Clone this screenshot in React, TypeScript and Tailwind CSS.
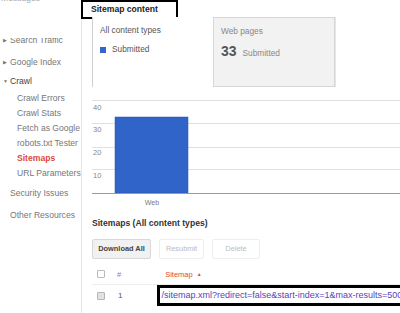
import React from "react";

const subItems = ["Crawl Errors", "Crawl Stats", "Fetch as Google", "robots.txt Tester"];

function Caret({ open }: { open?: boolean }) {
  return (
    <span className="inline-block w-[7px] text-[5px] leading-none text-[#777]">{open ? "▼" : "▶"}</span>
  );
}

function Sidebar() {
  return (
    <div className="w-[82px] shrink-0 border-r border-[#e6e6e6] bg-white text-[8.6px] text-[#777]">
      {/* top item, cut off by the crop */}
      <div className="h-[4px] overflow-hidden pl-[1px]">
        <div className="-mt-[7px] leading-[11px] text-[#aaa]">Messages</div>
      </div>
      <div className="mt-[34px] h-[8px] overflow-hidden pl-[3px]">
        <div className="-mt-[3px] flex items-center leading-[11px]">
          <Caret />
          <span>Search Traffic</span>
        </div>
      </div>
      <div className="mt-[7px] flex h-[18px] items-center pl-[3px]">
        <Caret />
        <span>Google Index</span>
      </div>
      <div className="flex h-[20px] items-center pl-[3px] text-[#444]">
        <Caret open />
        <span>Crawl</span>
      </div>
      {subItems.map((s) => (
        <div key={s} className="flex h-[15px] items-center pl-[17px]">
          {s}
        </div>
      ))}
      <div className="flex h-[15px] items-center pl-[17px] font-bold text-[#dd4b39]">Sitemaps</div>
      <div className="flex h-[15px] items-center pl-[17px]">URL Parameters</div>
      <div className="flex h-[24px] items-center pl-[10px]">Security Issues</div>
      <div className="flex h-[20px] items-center pl-[10px]">Other Resources</div>
    </div>
  );
}

function Chart() {
  const grid = [5, 28, 52, 74];
  const labels = [
    { t: "40", y: 15 },
    { t: "30", y: 37 },
    { t: "20", y: 60 },
    { t: "10", y: 83 },
  ];
  return (
    <svg width="308" height="116" className="block" fontFamily="Liberation Sans, Arial, sans-serif">
      {grid.map((y) => (
        <line key={y} x1="0" x2="308" y1={y + 0.5} y2={y + 0.5} stroke="#e0e0e0" strokeWidth="1" />
      ))}
      {labels.map((l) => (
        <text key={l.t} x="1" y={l.y} fontSize="7.5" fill="#888">
          {l.t}
        </text>
      ))}
      <rect x="23" y="22" width="73" height="76" fill="#3064c8" stroke="#2a56b0" strokeWidth="0.5" />
      <line x1="0" x2="308" y1="98.5" y2="98.5" stroke="#999" strokeWidth="1.2" />
      <text x="60" y="110" fontSize="7" fill="#777" textAnchor="middle">
        Web
      </text>
    </svg>
  );
}

export default function App() {
  return (
    <div className="flex h-[313px] w-[400px] overflow-hidden bg-white font-['Liberation_Sans',Arial,sans-serif]">
      <Sidebar />

      <div className="flex min-w-0 flex-1 flex-col">
        {/* header box */}
        <div className="-ml-px flex h-[19px] w-[97px] items-center border-[2.5px] border-black pl-[8px] text-[8.6px] font-bold text-[#222]">
          Sitemap content
        </div>

        {/* tabs */}
        <div className="-mt-[2px] flex pl-[10px]">
          <div className="h-[70px] w-[121px] border-l border-[#cfcfcf] bg-white px-[7px] pt-[7px] text-[8.3px] text-[#555]">
            <div>All content types</div>
            <div className="mt-[7px] flex items-center gap-[6px]">
              <span className="h-[6px] w-[6px] bg-[#3366cc]" />
              <span>Submitted</span>
            </div>
          </div>
          <div className="h-[70px] w-[122px] border border-[#d6d6d6] bg-[#f2f2f2] px-[7px] pt-[7px] text-[8.3px] text-[#888] shadow-[1px_0_0_#e6e6e6]">
            <div>Web pages</div>
            <div className="mt-[4px] flex items-baseline gap-[6px]">
              <span className="text-[14px] font-bold text-[#555]">33</span>
              <span>Submitted</span>
            </div>
          </div>
        </div>

        {/* chart */}
        <div className="mt-[8px] pl-[10px]">
          <Chart />
        </div>

        {/* sitemaps table */}
        <div className="pl-[10px]">
          <div className="mt-[6px] text-[8.6px] font-bold text-[#333]">Sitemaps (All content types)</div>
          <div className="mt-[9px] flex gap-[8px]">
            <div className="flex h-[20px] w-[59px] items-center justify-center rounded-[2px] border border-[#d8d8d8] bg-[#f1f1f1] text-[7.4px] font-bold text-[#444]">
              Download All
            </div>
            <div className="flex h-[20px] w-[45px] items-center justify-center rounded-[2px] border border-[#eeeeee] bg-white text-[7.4px] text-[#bbb]">
              Resubmit
            </div>
            <div className="flex h-[20px] w-[48px] items-center justify-center rounded-[2px] border border-[#eeeeee] bg-white text-[7.4px] text-[#bbb]">
              Delete
            </div>
          </div>

          <div className="mt-[6px] flex h-[20px] items-center border-b border-[#ececec] text-[7.5px]">
            <span className="ml-[5px] h-[8px] w-[8px] rounded-[1px] border border-[#bbb] bg-white" />
            <span className="ml-[12px] text-[#888]">#</span>
            <span className="ml-[44px] flex items-center gap-[4px] text-[#dd4b39]">
              Sitemap <span className="text-[5px]">▲</span>
            </span>
          </div>

          <div className="flex h-[22px] items-center">
            <span className="ml-[5px] h-[8px] w-[8px] rounded-[1px] border border-[#b5b5b5] bg-[#e2e2e2]" />
            <span className="ml-[13px] text-[8px] text-[#555]">1</span>
            <div className="ml-[35px] flex h-[21px] min-w-0 flex-1 items-center overflow-hidden whitespace-nowrap border-[3px] border-r-0 border-black pl-[1px] text-[9px] text-[#5a3fc0]">
              /sitemap.xml?redirect=false&amp;start-index=1&amp;max-results=500
            </div>
          </div>
        </div>
      </div>
    </div>
  );
}
